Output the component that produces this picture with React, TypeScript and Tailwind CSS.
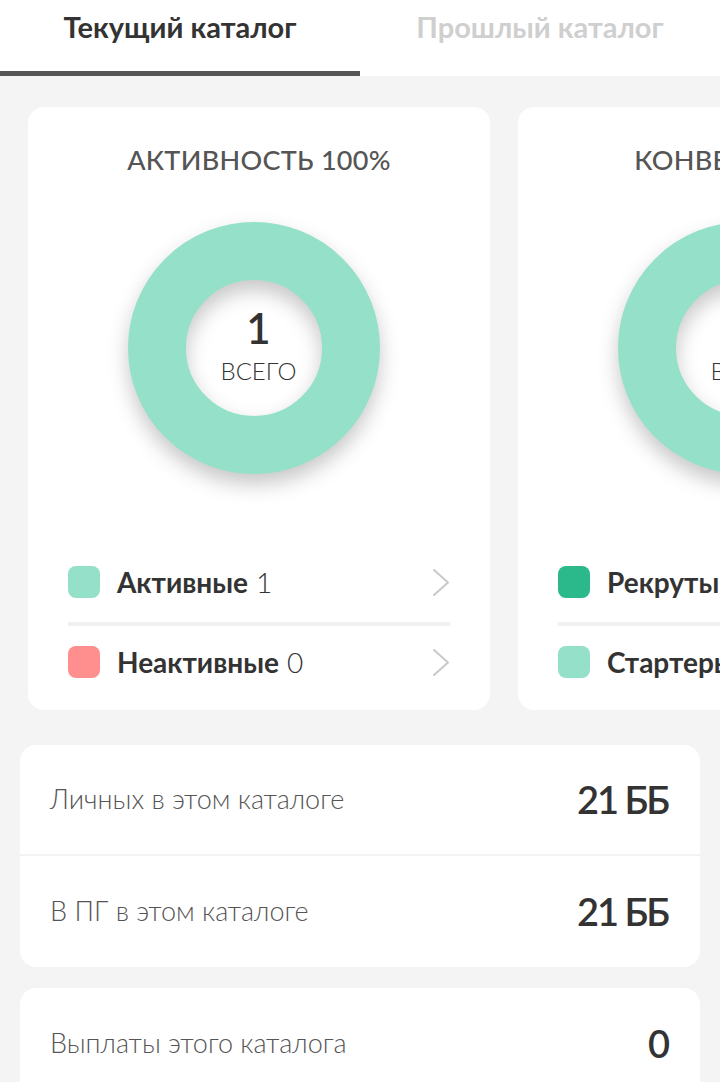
import React from 'react';

const font = { fontFamily: 'Lato, "Noto Sans", sans-serif' };

function Chevron() {
  return (
    <svg width="18" height="29" viewBox="0 0 18 29" fill="none">
      <polyline points="2,2 16,14.5 2,27" stroke="#c9c9c9" strokeWidth="2" strokeLinejoin="round" strokeLinecap="round" />
    </svg>
  );
}

function Donut({ total }: { total: number }) {
  return (
    <div className="relative w-[252px] h-[252px]">
      <svg
        width="252"
        height="252"
        viewBox="0 0 252 252"
        className="drop-shadow-[0_10px_10px_rgba(0,0,0,0.22)]">
        <circle cx="126" cy="126" r="97" fill="none" stroke="#95e0c8" strokeWidth="58" />
      </svg>
      <div className="absolute inset-0 flex flex-col items-center justify-center pl-[9px]">
        <span className="text-[42px] leading-none font-semibold text-[#333] mt-[-6px]">{total}</span>
        <span className="text-[24px] leading-none font-light text-[#333] mt-[10px]">ВСЕГО</span>
      </div>
    </div>
  );
}

type Legend = { color: string; label: string; value?: number };

function ChartCard({ title, total, items }: { title: string; total: number; items: Legend[] }) {
  return (
    <div className="shrink-0 w-[462px] h-[603px] bg-white rounded-[16px] pt-[36px] px-[40px] flex flex-col">
      <div className="h-[34px] flex items-center justify-center text-[27px] font-medium text-[#555] tracking-[0.3px] whitespace-nowrap">
        {title}
      </div>
      <div className="flex justify-center mt-[45px] pr-[10px]">
        <Donut total={total} />
      </div>
      <div className="mt-[72px]">
        {items.map((it, i) =>
          <div key={it.label}>
            {i > 0 && <div className="h-[4px] bg-[#f1f1f1] mt-[4px]" />}
            <div className="h-[72px] flex items-center">
              <div className="w-[32px] h-[32px] rounded-[8px] shrink-0" style={{ backgroundColor: it.color }} />
              <div className="ml-[17px] text-[28px] text-[#333] whitespace-nowrap flex-1">
                <span className="font-bold">{it.label}</span>
                {it.value !== undefined && <span className="font-light ml-[8px]">{it.value}</span>}
              </div>
              <Chevron />
            </div>
          </div>
        )}
      </div>
    </div>
  );
}

function StatRow({ label, value, border }: { label: string; value: string; border?: boolean }) {
  return (
    <div className={`h-[111px] flex items-center justify-between pl-[30px] pr-[32px] ${border ? 'border-b-2 border-[#f3f3f3]' : ''}`}>
      <span className="text-[27px] font-light text-[#555]">{label}</span>
      <span className="text-[38px] font-semibold text-[#333] tracking-[-2px]">{value}</span>
    </div>
  );
}

export default function App() {
  return (
    <div className="w-[720px] h-[1082px] bg-[#f4f4f4] overflow-hidden" style={font}>
      <div className="h-[76px] bg-white flex">
        <div className="w-[360px] flex flex-col">
          <div className="flex-1 flex justify-center pt-[5px]">
            <span className="text-[29px] font-bold text-[#333]">Текущий каталог</span>
          </div>
          <div className="h-[5px] bg-[#555]" />
        </div>
        <div className="w-[360px] flex flex-col">
          <div className="flex-1 flex justify-center pt-[5px]">
            <span className="text-[29px] font-bold text-[#cfcfcf]">Прошлый каталог</span>
          </div>
        </div>
      </div>

      <div className="flex gap-[28px] pl-[28px] pt-[31px] overflow-hidden">
        <ChartCard
          title="АКТИВНОСТЬ 100%"
          total={1}
          items={[
            { color: '#95e0c8', label: 'Активные', value: 1 },
            { color: '#ff8e8e', label: 'Неактивные', value: 0 },
          ]} />
        <ChartCard
          title="КОНВЕРСИЯ 50%"
          total={1}
          items={[
            { color: '#2bb98b', label: 'Рекруты', value: 0 },
            { color: '#95e0c8', label: 'Стартеры', value: 1 },
          ]} />
      </div>

      <div className="mx-[20px] mt-[35px] bg-white rounded-[16px]">
        <StatRow label="Личных в этом каталоге" value="21 ББ" border />
        <StatRow label="В ПГ в этом каталоге" value="21 ББ" />
      </div>

      <div className="mx-[20px] mt-[21px] bg-white rounded-[16px]">
        <StatRow label="Выплаты этого каталога" value="0" />
      </div>
    </div>
  );
}
